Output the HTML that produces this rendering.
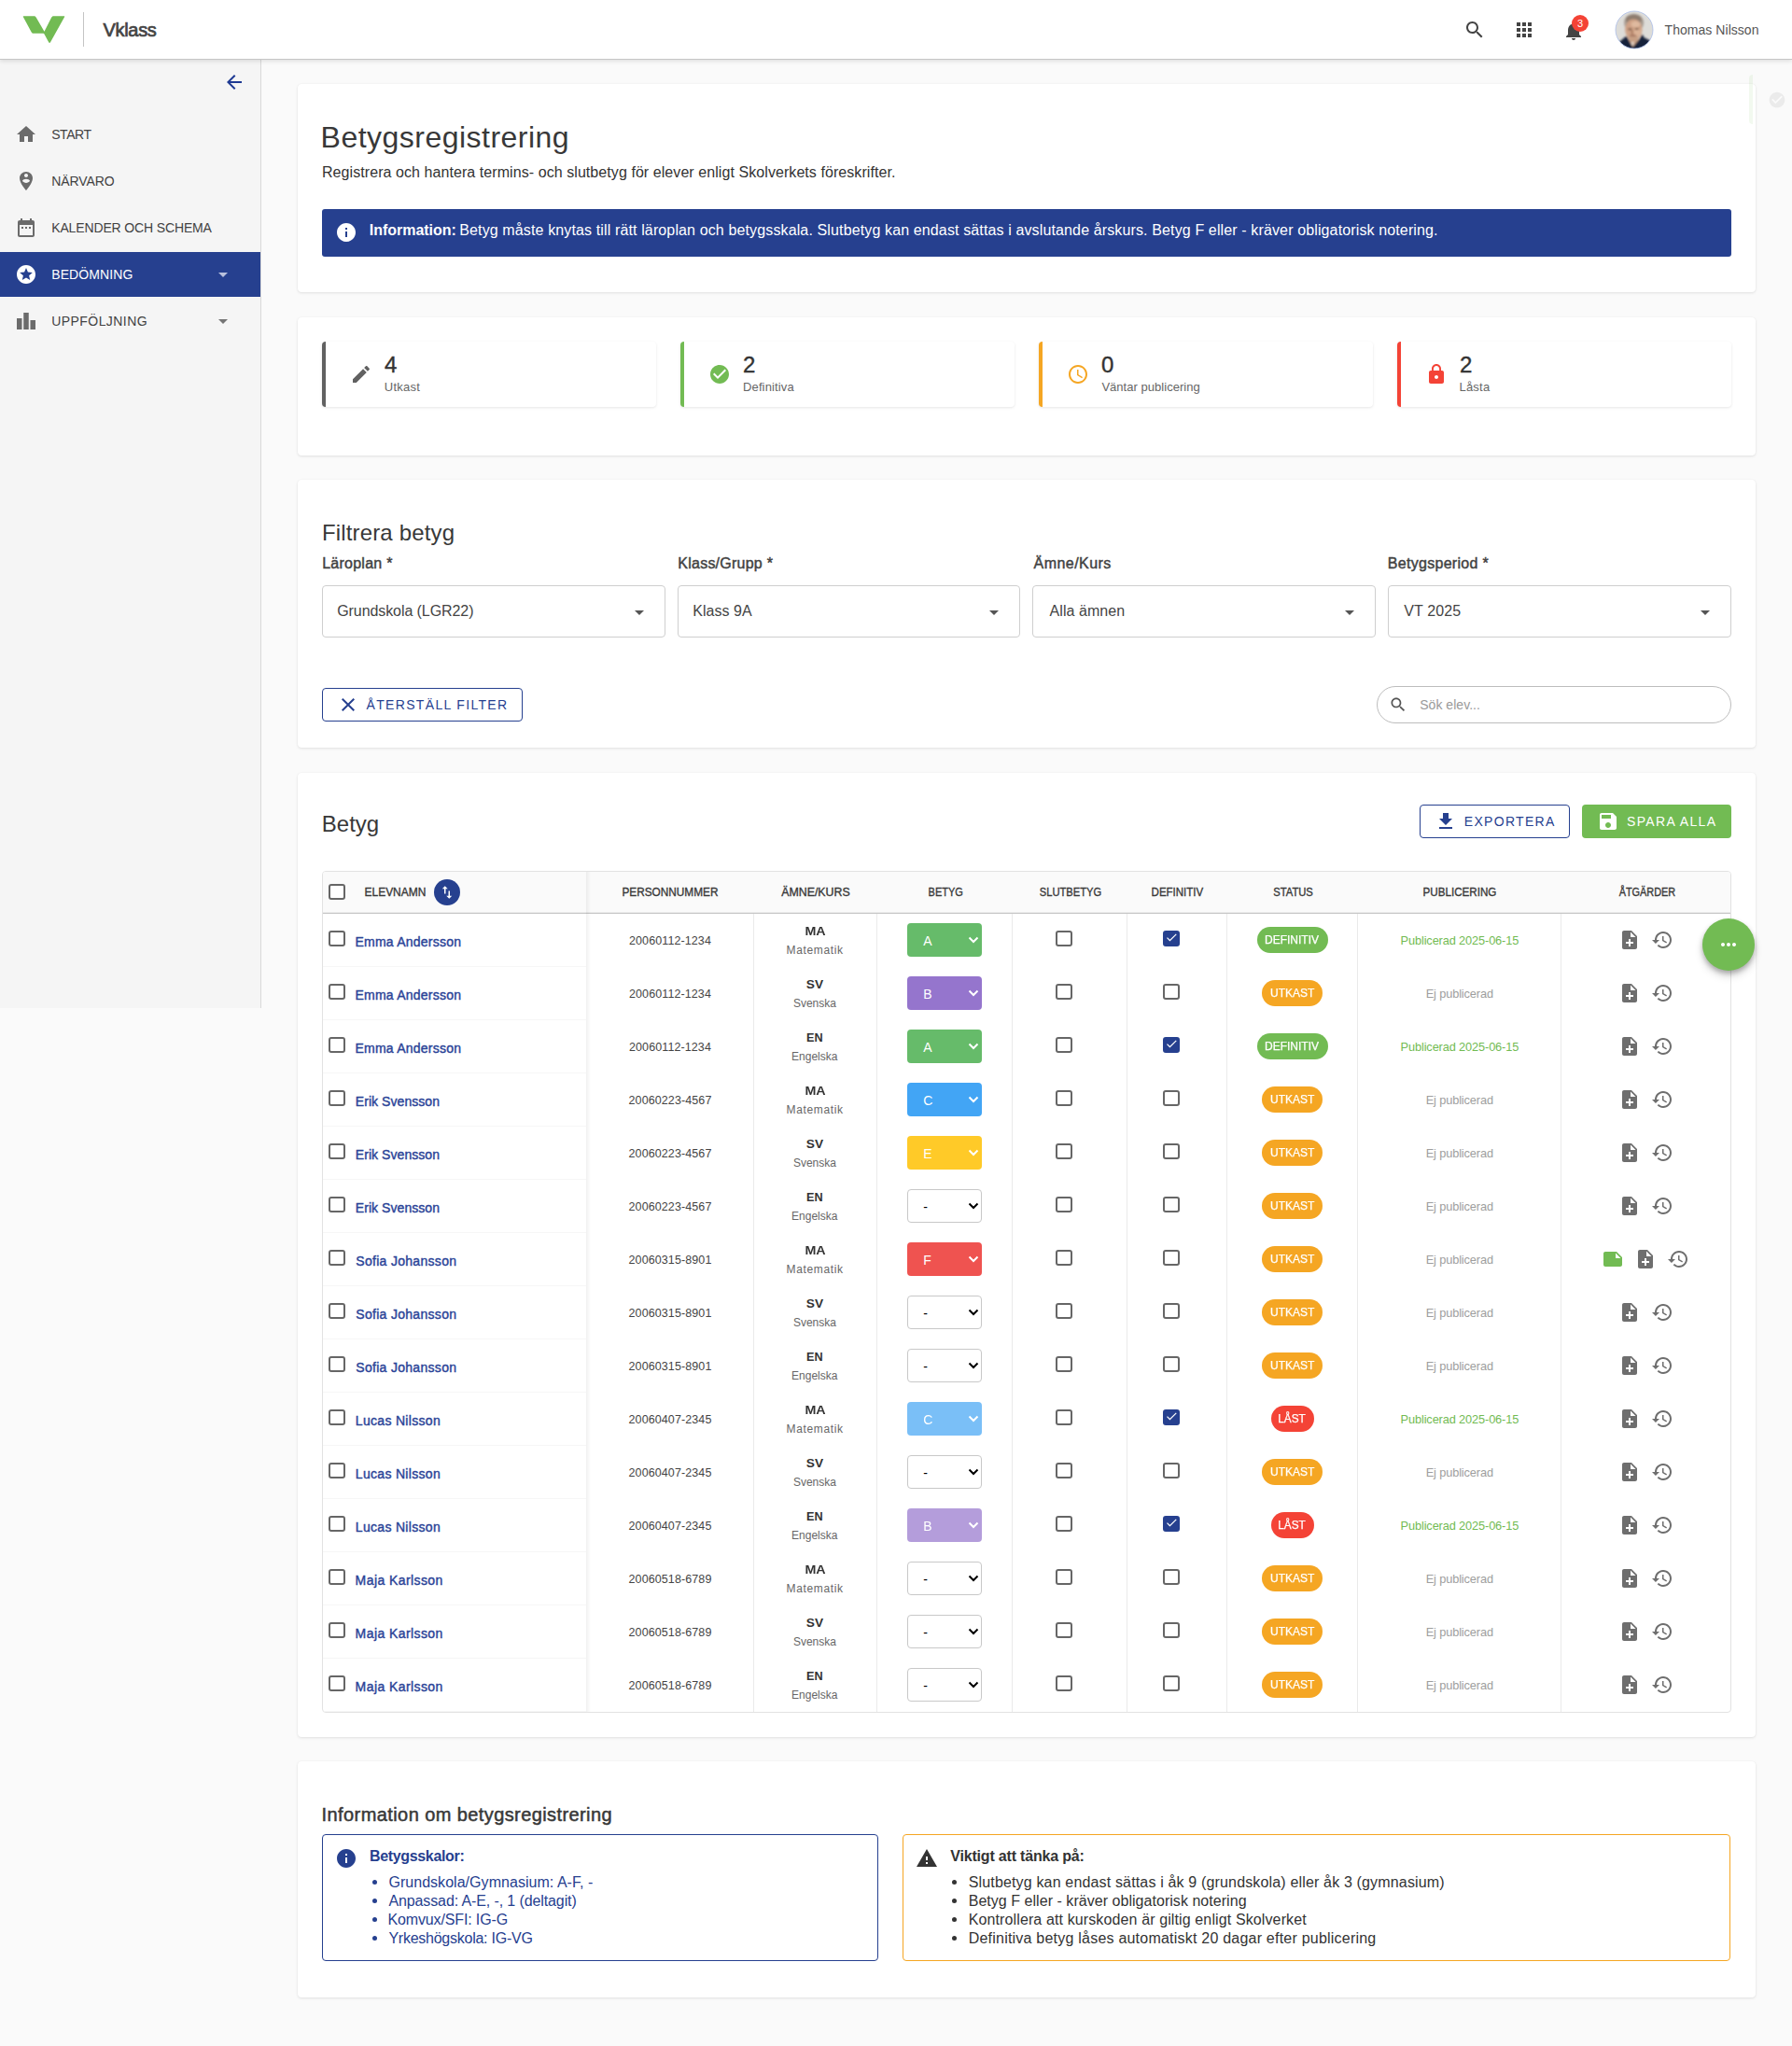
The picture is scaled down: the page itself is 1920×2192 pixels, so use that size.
<!DOCTYPE html>
<html lang="sv"><head><meta charset="utf-8"><title>Betygsregistrering - Vklass</title>
<style>
*{box-sizing:border-box}
html,body{margin:0;padding:0}
body{position:relative;width:1920px;height:2192px;overflow:hidden;background:#fafafa;color:#333;
 font-family:"Liberation Sans",sans-serif;font-size:16px;-webkit-font-smoothing:antialiased}
.ic{display:block;flex:none}
b{font-weight:700}
/* header */
.top{position:absolute;left:0;top:0;width:1920px;height:64px;background:#fff;border-bottom:1px solid #c6c6c6;
 box-shadow:0 2px 4px rgba(0,0,0,.10);z-index:20}
.logo{position:absolute;left:24px;top:17px}
.vsep{position:absolute;left:89px;top:13px;width:1px;height:37px;background:#c4c4c4}
.brand{position:absolute;left:109px;top:16px;font-size:20px;line-height:32px;font-weight:400;color:#444;-webkit-text-stroke:.7px #444}
.hi{position:absolute;top:20px;color:#444}
.badge{position:absolute;left:1684px;top:16px;width:18px;height:18px;border-radius:9px;background:#f44336;color:#fff;
 font-size:11px;line-height:18px;text-align:center}
.avatar{position:absolute;left:1730px;top:11px}
.uname{position:absolute;left:1783px;top:20px;font-size:14px;line-height:24px;color:#555;white-space:nowrap}
/* sidebar */
.side{position:absolute;left:0;top:64px;width:280px;height:1016px;background:#f5f5f5;border-right:1px solid #d9d9d9;z-index:5}
.bk{position:absolute;left:239px;top:12px}
.nav{position:absolute;left:0;width:279px;height:48px;color:#424242}
.nav .ic{position:absolute;left:16px;top:12px;color:#6b6b6b}
.nav .nl{position:absolute;left:56px;top:0;font-size:14px;line-height:48px;white-space:nowrap;letter-spacing:.4px}
.nav .dd{position:absolute;left:234px;top:22px;color:#757575}
.nav:nth-of-type(1){top:56px}.nav:nth-of-type(2){top:106px}.nav:nth-of-type(3){top:156px}.nav:nth-of-type(4){top:206px}.nav:nth-of-type(5){top:256px}
.nav.act{background:#26408f;color:#fff}
.nav.act .ic{color:#fff}
.nav.act .dd{color:#b9c1dd}
/* ghost */
.ghost{position:absolute;left:1874px;top:80px;width:4.2px;height:53px;border-radius:4px 0 0 4px;background:rgba(114,187,83,.09);z-index:30}
.ghostc{position:absolute;left:1894px;top:97px;z-index:1}
/* cards */
.card{position:absolute;left:319px;width:1562px;background:#fff;border-radius:4px;box-shadow:0 1px 3px rgba(0,0,0,.10),0 0 1px rgba(0,0,0,.08);z-index:2}
.k1{top:90px;height:223px}
.k2{top:340px;height:148px}
.k3{top:514px;height:286.5px}
.k4{top:827.5px;height:1033.5px}
.k5{top:1887px;height:252.5px}
h1,h2,h3,p{margin:0;font-weight:400;white-space:nowrap}
h1{position:absolute;left:26px;top:37px;font-size:32px;line-height:40px;color:#383838}
.sub{position:absolute;left:26px;top:83px;font-size:16px;line-height:24px;color:#333}
.alert{position:absolute;left:26px;top:133.5px;width:1510px;height:51.5px;background:#26408f;border-radius:3px;color:#fff}
.alert .ic{position:absolute;left:14px;top:13.5px}
.at{position:absolute;left:51px;top:11.5px;font-size:16px;line-height:24px;white-space:nowrap}
.at b,.at span,.ibt b,.ibt li span{display:inline-block}
/* stats */
.stat{position:absolute;top:26px;width:358.4px;height:70px;background:#fff;border-radius:4px;border-left:4px solid #616161;
 box-shadow:0 1px 3px rgba(0,0,0,.10)}
.s1{left:26px}.s2{left:410px;border-color:#72bb53}.s3{left:794px;border-color:#f5a623}.s4{left:1178px;border-color:#f44336}
.stat .ic{position:absolute;left:26px;top:23px}
.sv{position:absolute;left:63px;top:0}
.num{position:absolute;left:0;top:10px;font-size:24px;line-height:30px;color:#333;font-weight:400;-webkit-text-stroke:.4px #333}
.lbl{position:absolute;left:0;top:40px;font-size:13px;line-height:18px;color:#666;white-space:nowrap}
/* filter */
h2{position:absolute;left:26px;font-size:24px;line-height:32px;color:#383838}
.k3 h2{top:40.7px}
.frow{position:absolute;left:26px;top:0}
.fg{position:absolute;top:0;width:367.8px}
.fg:nth-child(1){left:0}.fg:nth-child(2){left:380.6px}.fg:nth-child(3){left:761.2px}.fg:nth-child(4){left:1141.8px}
.fg label{position:absolute;left:0;top:77.8px;font-size:16px;line-height:24px;font-weight:400;color:#424242;white-space:nowrap;-webkit-text-stroke:.45px #424242}
.sel{position:absolute;left:0;top:113px;width:367.8px;height:56px;border:1px solid #cfcfcf;border-radius:4px;background:#fff}
.sel span{position:absolute;left:16px;top:15.2px;font-size:16px;line-height:24px;color:#444;white-space:nowrap}
.sel .ic{position:absolute;right:15px;top:15.5px}
.btn{position:absolute;height:36px;border-radius:4px;font-size:14px;white-space:nowrap}
.btn span{position:absolute;top:0;line-height:34px}
.btn.out{border:1px solid #26408f;color:#26408f;background:#fff}
.btn.grn{background:#72bb53;color:#fff}
.btn.grn span{line-height:36px}
.rst{left:26px;top:223px;width:214.5px}
.rst .ic{position:absolute;left:15px;top:4.7px}
.rst span{left:47.5px}
.srch{position:absolute;left:1156.3px;top:221.3px;width:379.4px;height:39.7px;border:1px solid #bdbdbd;border-radius:20px;background:#fff}
.srch .ic{position:absolute;left:11.5px;top:8.4px}
.ph{position:absolute;left:44.5px;top:7px;font-size:14px;line-height:24px;color:#9a9a9a;white-space:nowrap}
/* table card */
.k4 h2{top:39px}
.exp{left:1202px;top:34.5px;width:161px}
.exp .ic{position:absolute;left:15px;top:5px}
.exp span{left:47px}
.sav{left:1376px;top:34.5px;width:160px}
.sav .ic{position:absolute;left:15.5px;top:6px}
.sav span{left:49px}
.tbl{position:absolute;left:26px;top:105.5px;width:1510px;height:902px;border:1px solid #e2e2e2;border-radius:4px;background:#fff;overflow:hidden}
.tr{display:flex;height:57px;position:relative}
.tr.th{height:44.5px;background:#fafafa;border-bottom:1px solid #c6c6c6;box-shadow:inset 0 -1px 0 #ebebeb}
.td{position:relative;flex:none;height:100%;border-right:1px solid #eaeaea;text-align:center}
.th .td{border-right-color:transparent}
.c1{width:282px;text-align:left;border-right:0;border-bottom:1px solid #f6f6f6}
.th .c1{border-bottom:0}
.c2{width:180px}.c3{width:132px}.c4{width:145px}.c5{width:123px}.c6{width:107px}.c7{width:140px}.c8{width:218px}.c9{width:181px;border-right:0}
.c1sh{position:absolute;left:281.5px;top:0;width:5px;height:100%;background:linear-gradient(90deg,rgba(0,0,0,.06),rgba(0,0,0,0));pointer-events:none}
.hl{display:inline-block;font-size:12.5px;line-height:45px;font-weight:400;color:#383838;white-space:nowrap;-webkit-text-stroke:.35px #383838}
.c1 .hl{position:absolute;left:44.5px;top:0}
.cb{display:inline-block;width:17.3px;height:17.3px;border:2px solid #666;border-radius:3px;background:#fff;vertical-align:top}
.cb.on{background:#26408f;border-color:#26408f}
.cb.on .ic{margin:-2px 0 0 -.6px}
.hcb{position:absolute;left:6.4px;top:13.2px}
.rcb{position:absolute;left:6.4px;top:18px}
.sort{position:absolute;left:119px;top:8px;width:28px;height:28px;border-radius:50%;background:#26408f}
.sort .ic{position:absolute;left:5px;top:5px}
.nm{position:absolute;left:35px;top:20px;font-size:14px;line-height:20px;font-weight:400;color:#2a4397;white-space:nowrap;-webkit-text-stroke:.4px #2a4397}
.pn{display:inline-block;font-size:12.5px;line-height:58px;color:#444;white-space:nowrap}
.sc{display:block;margin-top:10px;font-size:13px;line-height:18px;font-weight:700;color:#333}
.sn{display:block;margin-top:2px;font-size:12px;line-height:18px;color:#666}
.gs{position:absolute;left:32.2px;top:10.5px;width:79.7px;height:36px;border-radius:4px;color:#fff;font-size:14px;text-align:left}
.gs .gl{position:absolute;left:17px;top:.5px;line-height:36px}
.gs .chev{position:absolute;left:64.5px;top:14px}
.gA{background:#66bb6a}.gB{background:#9575cd}.gC{background:#42a5f5}.gE{background:#ffca28}.gF{background:#ef5350}
.gN{background:#fff;border:1px solid #c8c8c8;color:#000}
.gN .gl{left:16px;top:0}.gN .chev{left:63.5px;top:13px}
.gs.lk{opacity:.7}
.c5 .cb{position:absolute;left:46.3px;top:18px}
.c6 .cb{position:absolute;left:38.3px;top:18px}
.chip{display:inline-block;margin-top:14px;height:28.4px;line-height:28.6px;padding:0;text-align:center;border-radius:14px;color:#fff;font-size:12px;font-weight:400;white-space:nowrap;-webkit-text-stroke:.25px #fff}
.chip span{display:inline-block}
.cdef{background:#72bb53;width:76px}.cutk{background:#f5a623;width:65px}.clast{background:#f44336;width:46px}
.pub{display:inline-block;font-size:12.8px;line-height:57px;color:#9e9e9e;white-space:nowrap}
.pub.ok{color:#72bb53}
.c9{color:#6e6e6e}
.acts{display:flex;justify-content:center;padding-top:16px;margin-right:1px}
.ab{display:block;width:35px;height:24px}
.ab .ic{margin:0 auto}
.fab{position:absolute;left:1505px;top:156px;width:56px;height:56px;border-radius:50%;background:#72bb53;z-index:6;
 box-shadow:0 3px 5px rgba(0,0,0,.25),0 6px 10px rgba(0,0,0,.14)}
.fab .ic{margin:16px}
/* info card */
h3{position:absolute;left:26px;top:41.6px;font-size:20px;line-height:30px;font-weight:400;color:#383838;-webkit-text-stroke:.5px #383838}
.ibox{position:absolute;top:78.3px;height:136px;border-radius:4px;background:#fff}
.ib1{left:26px;width:595.8px;border:1px solid #26408f;color:#26408f}
.ib2{left:647.9px;width:887.6px;border:1px solid #f5a623;color:#333}
.ibox .ic{position:absolute;left:13px;top:13px}
.ibt{position:absolute;left:50px;top:11px;font-size:16px;line-height:24px;white-space:nowrap}
.ibt ul{list-style:none;margin:5.6px 0 0 0;padding:0}
.ibt li{position:relative;padding-left:20px;line-height:19.9px}
.ibt li::before{content:"";position:absolute;left:2.5px;top:7.6px;width:5px;height:5px;border-radius:50%;background:currentColor}

</style></head><body>
<header class="top">
<svg class="logo" width="46" height="30" viewBox="0 0 46 30"><path fill="#72bb53" d="M1.2 0.3h11.2c1 0 1.7.4 2.2 1.3l8.9 15.2L31 2c.6-1.2 1.3-1.7 2.4-1.7h11.4c.5 0 .6.3.4.7L30 28.3c-.5.9-1.3.9-1.8 0l-4.6-8.6c-.4-.7-.8-.9-1.6-.9H11.8c-1 0-1.6-.4-2.1-1.300L.8 1C.6.6.7.3 1.200.3z"/></svg>
<span class="vsep"></span>
<span class="brand" style="letter-spacing:-0.32px;transform:translateX(1.5px);">Vklass</span>
<span class="hi" style="left:1567.600px"><svg class="ic" width="24" height="24" viewBox="0 0 24 24" style=""><path fill="currentColor" d="M15.5 14h-.79l-.28-.27C15.41 12.59 16 11.11 16 9.5 16 5.91 13.09 3 9.5 3S3 5.91 3 9.5 5.91 16 9.5 16c1.61 0 3.09-.59 4.23-1.57l.27.28v.79l5 4.99L20.49 19l-4.99-5zm-6 0C7.01 14 5 11.99 5 9.5S7.01 5 9.5 5 14 7.01 14 9.5 11.99 14 9.5 14z"/></svg></span>
<span class="hi" style="left:1621px"><svg class="ic" width="24" height="24" viewBox="0 0 24 24" style=""><path fill="currentColor" d="M4 8h4V4H4v4zm6 12h4v-4h-4v4zm-6 0h4v-4H4v4zm0-6h4v-4H4v4zm6 0h4v-4h-4v4zm6-10v4h4V4h-4zm-6 4h4V4h-4v4zm6 6h4v-4h-4v4zm0 6h4v-4h-4v4z"/></svg></span>
<span class="hi" style="left:1674px;top:21px"><svg class="ic" width="24" height="24" viewBox="0 0 24 24" style=""><path fill="currentColor" d="M12 22c1.1 0 2-.9 2-2h-4c0 1.1.89 2 2 2zm6-6v-5c0-3.07-1.64-5.64-4.5-6.32V4c0-.83-.67-1.5-1.5-1.5s-1.5.67-1.5 1.5v.68C7.63 5.36 6 7.92 6 11v5l-2 2v1h16v-1l-2-2z"/></svg></span>
<span class="badge">3</span>
<svg class="avatar" width="42" height="42" viewBox="-1 -1 42 42"><defs><clipPath id="avc"><circle cx="20" cy="20" r="20"/></clipPath><filter id="avb" x="-10%" y="-10%" width="120%" height="120%"><feGaussianBlur stdDeviation="1.1"/></filter></defs>
<g clip-path="url(#avc)"><rect x="-2" y="-2" width="44" height="44" fill="#dddcd8"/><g filter="url(#avb)">
<ellipse cx="19.6" cy="12.5" rx="10.6" ry="9.8" fill="#a89d93"/><ellipse cx="19.3" cy="9" rx="8.6" ry="5.6" fill="#8e7d70"/>
<ellipse cx="19.3" cy="19.6" rx="9.2" ry="11.2" fill="#cfa286"/><ellipse cx="21.5" cy="14" rx="5" ry="3.2" fill="#dfb99f"/><ellipse cx="23.5" cy="22.5" rx="3.6" ry="4.2" fill="#dbb296"/>
<ellipse cx="15.4" cy="19.3" rx="2.4" ry="1.1" fill="#7b5b49"/><ellipse cx="22.8" cy="18.9" rx="2.2" ry="1" fill="#7b5b49"/><ellipse cx="17.6" cy="22.5" rx="1.1" ry="2.6" fill="#a97a61"/>
<ellipse cx="18.6" cy="26.2" rx="3.6" ry=".9" fill="#9c6a55"/>
<path d="M13.5 27 24.5 27 24.5 33 18.500 38.500 15 33z" fill="#c79f83"/>
<path d="M-2 42V37L5 32 11.700 26.400 17.200 36.600 18.600 38.200 25.600 29.800 28.400 24.400 30.600 28.200 36.500 31.200 42 35V42z" fill="#16243b"/>
<path d="M16.800 33.500 19.600 32.600 18.400 37.600z" fill="#e9e2da"/></g></g>
<circle cx="20" cy="20" r="20" fill="none" stroke="#a9bce9" stroke-width=".8"/></svg>
<span class="uname" style="letter-spacing:0.04px;transform:translateX(0.6px);">Thomas Nilsson</span>
</header>
<nav class="side"><span class="bk"><svg class="ic" width="24" height="24" viewBox="0 0 24 24" style=""><path fill="#1f3a93" d="M20 11H7.83l5.59-5.59L12 4l-8 8 8 8 1.41-1.41L7.83 13H20v-2z"/></svg></span>
<div class="nav"><svg class="ic" width="24" height="24" viewBox="0 0 24 24" style=""><path fill="currentColor" d="M10 20v-6h4v6h5v-8h3L12 3 2 12h3v8z"/></svg><span class="nl" style="letter-spacing:-0.45px;transform:translateX(-0.8px);">START</span></div>
<div class="nav"><svg class="ic" width="24" height="24" viewBox="0 0 24 24" style=""><path fill="currentColor" d="M12 2C8.14 2 5 5.14 5 9c0 5.25 7 13 7 13s7-7.75 7-13c0-3.86-3.14-7-7-7zm0 2c1.1 0 2 .9 2 2 0 1.11-.9 2-2 2s-2-.89-2-2c0-1.1.9-2 2-2zm0 10c-1.67 0-3.14-.85-4-2.15.02-1.32 2.67-2.05 4-2.05s3.98.73 4 2.05c-.86 1.3-2.33 2.15-4 2.15z"/></svg><span class="nl" style="letter-spacing:-0.07px;transform:translateX(-0.8px);">NÄRVARO</span></div>
<div class="nav"><svg class="ic" width="24" height="24" viewBox="0 0 24 24" style=""><path fill="currentColor" d="M9 11H7v2h2v-2zm4 0h-2v2h2v-2zm4 0h-2v2h2v-2zm2-7h-1V2h-2v2H8V2H6v2H5c-1.11 0-1.99.9-1.99 2L3 20c0 1.1.89 2 2 2h14c1.1 0 2-.9 2-2V6c0-1.1-.9-2-2-2zm0 16H5V9h14v11z"/></svg><span class="nl" style="letter-spacing:-0.14px;transform:translateX(-0.8px);">KALENDER OCH SCHEMA</span></div>
<div class="nav act"><svg class="ic" width="24" height="24" viewBox="0 0 24 24" style=""><path fill="currentColor" d="M11.99 2C6.47 2 2 6.48 2 12s4.47 10 9.99 10C17.52 22 22 17.52 22 12S17.52 2 11.99 2zm4.24 16L12 15.45 7.77 18l1.12-4.81-3.73-3.23 4.92-.42L12 5l1.92 4.53 4.92.42-3.73 3.23L16.23 18z"/></svg><span class="nl" style="letter-spacing:0.10px;transform:translateX(-0.8px);">BEDÖMNING</span><svg class="dd" width="10" height="5" viewBox="0 0 10 5"><path d="M0 0h10L5 5z" fill="currentColor"/></svg></div>
<div class="nav"><svg class="ic" width="24" height="24" viewBox="0 0 24 24" style=""><path fill="currentColor" d="M7.5 21H2V9h5.5v12zm7.25-18h-5.5v18h5.5V3zM22 11h-5.5v10H22V11z"/></svg><span class="nl" style="letter-spacing:0.44px;transform:translateX(-0.8px);">UPPFÖLJNING</span><svg class="dd" width="10" height="5" viewBox="0 0 10 5"><path d="M0 0h10L5 5z" fill="currentColor"/></svg></div>
</nav>
<div class="ghost"></div><span class="ghostc"><svg class="ic" width="20" height="20" viewBox="0 0 24 24" style=""><path fill="#ebebeb" d="M12 2C6.48 2 2 6.48 2 12s4.48 10 10 10 10-4.48 10-10S17.52 2 12 2zm-2 15l-5-5 1.41-1.41L10 14.17l7.59-7.59L19 8l-9 9z"/></svg></span>
<main>
<section class="card k1">
<h1 style="letter-spacing:0.48px;transform:translateX(-1.4px);">Betygsregistrering</h1>
<p class="sub" style="letter-spacing:0.07px;">Registrera och hantera termins- och slutbetyg för elever enligt Skolverkets föreskrifter.</p>
<div class="alert"><svg class="ic" width="24" height="24" viewBox="0 0 24 24" style=""><path fill="#fff" d="M12 2C6.48 2 2 6.48 2 12s4.48 10 10 10 10-4.48 10-10S17.52 2 12 2zm1 15h-2v-6h2v6zm0-8h-2V7h2v2z"/></svg><span class="at"><b style="letter-spacing:-0.03px;transform:translateX(-0.2px);">Information:</b> <span style="letter-spacing:0.13px;transform:translateX(-1.2px);">Betyg måste knytas till rätt läroplan och betygsskala. Slutbetyg kan endast sättas i avslutande årskurs. Betyg F eller - kräver obligatorisk notering.</span></span></div>
</section>
<section class="card k2">
<div class="stat s1"><svg class="ic" width="24" height="24" viewBox="0 0 24 24" style=""><path fill="#616161" d="M3 17.25V21h3.75L17.81 9.94l-3.75-3.75L3 17.25zM20.71 7.04c.39-.39.39-1.02 0-1.41l-2.34-2.34c-.39-.39-1.02-.39-1.41 0l-1.83 1.83 3.75 3.75 1.83-1.83z"/></svg><div class="sv"><div class="num">4</div><div class="lbl" style="letter-spacing:0.24px;transform:translateX(-0.2px);">Utkast</div></div></div>
<div class="stat s2"><svg class="ic" width="24" height="24" viewBox="0 0 24 24" style=""><path fill="#72bb53" d="M12 2C6.48 2 2 6.48 2 12s4.48 10 10 10 10-4.48 10-10S17.52 2 12 2zm-2 15l-5-5 1.41-1.41L10 14.17l7.59-7.59L19 8l-9 9z"/></svg><div class="sv"><div class="num">2</div><div class="lbl" style="letter-spacing:0.13px;">Definitiva</div></div></div>
<div class="stat s3"><svg class="ic" width="24" height="24" viewBox="0 0 24 24" style=""><path fill="#f5a623" d="M11.99 2C6.47 2 2 6.48 2 12s4.47 10 9.99 10C17.52 22 22 17.52 22 12S17.52 2 11.99 2zM12 20c-4.42 0-8-3.58-8-8s3.58-8 8-8 8 3.58 8 8-3.58 8-8 8zm.5-13H11v6l5.25 3.15.75-1.23-4.5-2.67z"/></svg><div class="sv"><div class="num">0</div><div class="lbl" style="letter-spacing:0.03px;transform:translateX(0.4px);">Väntar publicering</div></div></div>
<div class="stat s4"><svg class="ic" width="24" height="24" viewBox="0 0 24 24" style=""><path fill="#f44336" d="M18 8h-1V6c0-2.76-2.24-5-5-5S7 3.24 7 6v2H6c-1.1 0-2 .9-2 2v10c0 1.1.9 2 2 2h12c1.1 0 2-.9 2-2V10c0-1.1-.9-2-2-2zm-6 9c-1.1 0-2-.9-2-2s.9-2 2-2 2 .9 2 2-.9 2-2 2zm3.1-9H8.9V6c0-1.71 1.39-3.1 3.1-3.1 1.71 0 3.1 1.39 3.1 3.1v2z"/></svg><div class="sv"><div class="num">2</div><div class="lbl" style="letter-spacing:0.25px;transform:translateX(-0.6px);">Låsta</div></div></div>
</section>
<section class="card k3"><h2 style="letter-spacing:0.15px;">Filtrera betyg</h2><div class="frow">
<div class="fg"><label style="letter-spacing:0.25px;transform:translateX(0.2px);">Läroplan *</label><div class="sel"><span style="letter-spacing:-0.08px;transform:translateX(-0.8px);">Grundskola (LGR22)</span><svg class="ic" width="24" height="24" viewBox="0 0 24 24" style=""><path fill="#555" d="M7 10l5 5 5-5z"/></svg></div></div>
<div class="fg"><label style="letter-spacing:0.24px;transform:translateX(0.7px);">Klass/Grupp *</label><div class="sel"><span style="letter-spacing:0.06px;transform:translateX(-0.4px);">Klass 9A</span><svg class="ic" width="24" height="24" viewBox="0 0 24 24" style=""><path fill="#555" d="M7 10l5 5 5-5z"/></svg></div></div>
<div class="fg"><label style="letter-spacing:0.45px;transform:translateX(1.4px);">Ämne/Kurs</label><div class="sel"><span style="letter-spacing:0.06px;transform:translateX(1.4px);">Alla ämnen</span><svg class="ic" width="24" height="24" viewBox="0 0 24 24" style=""><path fill="#555" d="M7 10l5 5 5-5z"/></svg></div></div>
<div class="fg"><label style="letter-spacing:0.29px;">Betygsperiod *</label><div class="sel"><span style="letter-spacing:0.13px;transform:translateX(0.4px);">VT 2025</span><svg class="ic" width="24" height="24" viewBox="0 0 24 24" style=""><path fill="#555" d="M7 10l5 5 5-5z"/></svg></div></div>
</div><div class="frow2"><span class="btn out rst"><svg class="ic" width="24" height="24" viewBox="0 0 24 24" style=""><path fill="currentColor" d="M19 6.41L17.59 5 12 10.59 6.41 5 5 6.41 10.59 12 5 17.59 6.41 19 12 13.41 17.59 19 19 17.59 13.41 12z"/></svg><span style="letter-spacing:1.33px;transform:translateX(-1.0px);">ÅTERSTÄLL FILTER</span></span><span class="srch"><svg class="ic" width="20" height="20" viewBox="0 0 24 24" style=""><path fill="#555" d="M15.5 14h-.79l-.28-.27C15.41 12.59 16 11.11 16 9.5 16 5.91 13.09 3 9.5 3S3 5.91 3 9.5 5.91 16 9.5 16c1.61 0 3.09-.59 4.23-1.57l.27.28v.79l5 4.99L20.49 19l-4.99-5zm-6 0C7.01 14 5 11.99 5 9.5S7.01 5 9.5 5 14 7.01 14 9.5 11.99 14 9.5 14z"/></svg><span class="ph" style="letter-spacing:0.04px;transform:translateX(0.4px);">Sök elev...</span></span></div></section>
<section class="card k4"><h2 style="letter-spacing:0.00px;transform:translateX(-0.2px);">Betyg</h2>
<span class="btn out exp"><svg class="ic" width="24" height="24" viewBox="0 0 24 24" style=""><path fill="currentColor" d="M19 9h-4V3H9v6H5l7 7 7-7zM5 18v2h14v-2H5z"/></svg><span style="letter-spacing:1.30px;transform:translateX(-0.2px);">EXPORTERA</span></span>
<span class="btn grn sav"><svg class="ic" width="24" height="24" viewBox="0 0 24 24" style=""><path fill="#fff" d="M17 3H5c-1.11 0-2 .9-2 2v14c0 1.1.89 2 2 2h14c1.1 0 2-.9 2-2V7l-4-4zm-5 16c-1.66 0-3-1.34-3-3s1.34-3 3-3 3 1.34 3 3-1.34 3-3 3zm3-10H5V5h10v4z"/></svg><span style="letter-spacing:1.33px;transform:translateX(-1.0px);">SPARA ALLA</span></span>
<div class="tbl"><div class="tr th">
<div class="td c1"><span class="cb hcb"></span><span class="hl" style="transform:translateX(-0.5px) scaleX(0.958);transform-origin:0 50%;">ELEVNAMN</span><span class="sort"><svg class="ic" width="18" height="18" viewBox="0 0 24 24" style=""><path fill="#fff" d="M16 17.01V10h-2v7.01h-3L15 21l4-3.99h-3zM9 3L5 6.99h3V14h2V6.99h3L9 3z"/></svg></span></div>
<div class="td c2"><span class="hl" style="transform:translateX(0.4px) scaleX(0.945);transform-origin:50% 50%;">PERSONNUMMER</span></div>
<div class="td c3"><span class="hl" style="transform:translateX(0.8px) scaleX(0.990);transform-origin:50% 50%;">ÄMNE/KURS</span></div>
<div class="td c4"><span class="hl" style="transform:translateX(1.0px) scaleX(0.880);transform-origin:50% 50%;">BETYG</span></div>
<div class="td c5"><span class="hl" style="transform:translateX(0.8px) scaleX(0.893);transform-origin:50% 50%;">SLUTBETYG</span></div>
<div class="td c6"><span class="hl" style="transform:translateX(0.2px) scaleX(0.921);transform-origin:50% 50%;">DEFINITIV</span></div>
<div class="td c7"><span class="hl" style="transform:translateX(0.8px) scaleX(0.898);transform-origin:50% 50%;">STATUS</span></div>
<div class="td c8"><span class="hl" style="transform:translateX(0.6px) scaleX(0.931);transform-origin:50% 50%;">PUBLICERING</span></div>
<div class="td c9"><span class="hl" style="transform:translateX(1.2px) scaleX(0.870);transform-origin:50% 50%;">ÅTGÄRDER</span></div>
</div>
<div class="tr"><div class="td c1"><span class="cb rcb"></span><span class="nm" style="letter-spacing:0.24px;transform:translateX(-0.6px);">Emma Andersson</span></div><div class="td c2"><span class="pn" style="letter-spacing:0.10px;transform:translateX(0.5px);">20060112-1234</span></div><div class="td c3"><span class="sc" style="transform:scaleX(1.100);transform-origin:50% 50%;">MA</span><span class="sn" style="letter-spacing:0.65px;transform:translateX(-0.4px);">Matematik</span></div><div class="td c4"><span class="gs gA"><span class="gl">A</span><svg class="chev" width="12" height="8" viewBox="0 0 12 8"><path d="M1.5 1.5 6 6l4.5-4.5" fill="none" stroke="currentColor" stroke-width="2"/></svg></span></div><div class="td c5"><span class="cb "></span></div><div class="td c6"><span class="cb on "><svg class="ic" width="14.5" height="14.5" viewBox="0 0 24 24" style=""><path fill="#fff" d="M9 16.17L4.83 12l-1.41 1.41L9 19 21 7l-1.41-1.41z"/></svg></span></div><div class="td c7"><span class="chip cdef"><span style="transform:scaleX(1.001);transform-origin:50% 50%;">DEFINITIV</span></span></div><div class="td c8"><span class="pub ok" style="letter-spacing:-0.14px;transform:translateX(0.4px);">Publicerad 2025-06-15</span></div><div class="td c9"><div class="acts"><span class="ab"><svg class="ic" width="24" height="24" viewBox="0 0 24 24" style=""><path fill="currentColor" d="M14 2H6c-1.1 0-1.99.9-1.99 2L4 20c0 1.1.89 2 1.99 2H18c1.1 0 2-.9 2-2V8l-6-6zm2 14h-3v3h-2v-3H8v-2h3v-3h2v3h3v2zm-3-7V3.5L18.5 9H13z"/></svg></span><span class="ab"><svg class="ic" width="24" height="24" viewBox="0 0 24 24" style=""><path fill="currentColor" d="M13 3c-4.97 0-9 4.03-9 9H1l3.89 3.89.07.14L9 12H6c0-3.87 3.13-7 7-7s7 3.13 7 7-3.13 7-7 7c-1.93 0-3.68-.79-4.94-2.06l-1.42 1.42C8.27 19.99 10.51 21 13 21c4.97 0 9-4.03 9-9s-4.03-9-9-9zm-1 5v5l4.28 2.54.72-1.21-3.5-2.08V8H12z"/></svg></span></div></div></div>
<div class="tr"><div class="td c1"><span class="cb rcb"></span><span class="nm" style="letter-spacing:0.24px;transform:translateX(-0.6px);">Emma Andersson</span></div><div class="td c2"><span class="pn" style="letter-spacing:0.10px;transform:translateX(0.5px);">20060112-1234</span></div><div class="td c3"><span class="sc" style="transform:translateX(-0.6px) scaleX(1.054);transform-origin:50% 50%;">SV</span><span class="sn" style="letter-spacing:-0.04px;transform:translateX(-0.6px);">Svenska</span></div><div class="td c4"><span class="gs gB"><span class="gl">B</span><svg class="chev" width="12" height="8" viewBox="0 0 12 8"><path d="M1.5 1.5 6 6l4.5-4.5" fill="none" stroke="currentColor" stroke-width="2"/></svg></span></div><div class="td c5"><span class="cb "></span></div><div class="td c6"><span class="cb "></span></div><div class="td c7"><span class="chip cutk"><span style="transform:scaleX(1.001);transform-origin:50% 50%;">UTKAST</span></span></div><div class="td c8"><span class="pub" style="letter-spacing:-0.14px;transform:translateX(0.3px);">Ej publicerad</span></div><div class="td c9"><div class="acts"><span class="ab"><svg class="ic" width="24" height="24" viewBox="0 0 24 24" style=""><path fill="currentColor" d="M14 2H6c-1.1 0-1.99.9-1.99 2L4 20c0 1.1.89 2 1.99 2H18c1.1 0 2-.9 2-2V8l-6-6zm2 14h-3v3h-2v-3H8v-2h3v-3h2v3h3v2zm-3-7V3.5L18.5 9H13z"/></svg></span><span class="ab"><svg class="ic" width="24" height="24" viewBox="0 0 24 24" style=""><path fill="currentColor" d="M13 3c-4.97 0-9 4.03-9 9H1l3.89 3.89.07.14L9 12H6c0-3.87 3.13-7 7-7s7 3.13 7 7-3.13 7-7 7c-1.93 0-3.68-.79-4.94-2.06l-1.42 1.42C8.27 19.99 10.51 21 13 21c4.97 0 9-4.03 9-9s-4.03-9-9-9zm-1 5v5l4.28 2.54.72-1.21-3.5-2.08V8H12z"/></svg></span></div></div></div>
<div class="tr"><div class="td c1"><span class="cb rcb"></span><span class="nm" style="letter-spacing:0.24px;transform:translateX(-0.6px);">Emma Andersson</span></div><div class="td c2"><span class="pn" style="letter-spacing:0.10px;transform:translateX(0.5px);">20060112-1234</span></div><div class="td c3"><span class="sc" style="transform:translateX(-0.6px) scaleX(0.975);transform-origin:50% 50%;">EN</span><span class="sn" style="letter-spacing:-0.02px;transform:translateX(-0.8px);">Engelska</span></div><div class="td c4"><span class="gs gA"><span class="gl">A</span><svg class="chev" width="12" height="8" viewBox="0 0 12 8"><path d="M1.5 1.5 6 6l4.5-4.5" fill="none" stroke="currentColor" stroke-width="2"/></svg></span></div><div class="td c5"><span class="cb "></span></div><div class="td c6"><span class="cb on "><svg class="ic" width="14.5" height="14.5" viewBox="0 0 24 24" style=""><path fill="#fff" d="M9 16.17L4.83 12l-1.41 1.41L9 19 21 7l-1.41-1.41z"/></svg></span></div><div class="td c7"><span class="chip cdef"><span style="transform:scaleX(1.001);transform-origin:50% 50%;">DEFINITIV</span></span></div><div class="td c8"><span class="pub ok" style="letter-spacing:-0.14px;transform:translateX(0.4px);">Publicerad 2025-06-15</span></div><div class="td c9"><div class="acts"><span class="ab"><svg class="ic" width="24" height="24" viewBox="0 0 24 24" style=""><path fill="currentColor" d="M14 2H6c-1.1 0-1.99.9-1.99 2L4 20c0 1.1.89 2 1.99 2H18c1.1 0 2-.9 2-2V8l-6-6zm2 14h-3v3h-2v-3H8v-2h3v-3h2v3h3v2zm-3-7V3.5L18.5 9H13z"/></svg></span><span class="ab"><svg class="ic" width="24" height="24" viewBox="0 0 24 24" style=""><path fill="currentColor" d="M13 3c-4.97 0-9 4.03-9 9H1l3.89 3.89.07.14L9 12H6c0-3.87 3.13-7 7-7s7 3.13 7 7-3.13 7-7 7c-1.93 0-3.68-.79-4.94-2.06l-1.42 1.42C8.27 19.99 10.51 21 13 21c4.97 0 9-4.03 9-9s-4.03-9-9-9zm-1 5v5l4.28 2.54.72-1.21-3.5-2.08V8H12z"/></svg></span></div></div></div>
<div class="tr"><div class="td c1"><span class="cb rcb"></span><span class="nm" style="letter-spacing:0.06px;transform:translateX(-0.2px);">Erik Svensson</span></div><div class="td c2"><span class="pn" style="letter-spacing:0.10px;transform:translateX(0.5px);">20060223-4567</span></div><div class="td c3"><span class="sc" style="transform:scaleX(1.100);transform-origin:50% 50%;">MA</span><span class="sn" style="letter-spacing:0.65px;transform:translateX(-0.4px);">Matematik</span></div><div class="td c4"><span class="gs gC"><span class="gl">C</span><svg class="chev" width="12" height="8" viewBox="0 0 12 8"><path d="M1.5 1.5 6 6l4.5-4.5" fill="none" stroke="currentColor" stroke-width="2"/></svg></span></div><div class="td c5"><span class="cb "></span></div><div class="td c6"><span class="cb "></span></div><div class="td c7"><span class="chip cutk"><span style="transform:scaleX(1.001);transform-origin:50% 50%;">UTKAST</span></span></div><div class="td c8"><span class="pub" style="letter-spacing:-0.14px;transform:translateX(0.3px);">Ej publicerad</span></div><div class="td c9"><div class="acts"><span class="ab"><svg class="ic" width="24" height="24" viewBox="0 0 24 24" style=""><path fill="currentColor" d="M14 2H6c-1.1 0-1.99.9-1.99 2L4 20c0 1.1.89 2 1.99 2H18c1.1 0 2-.9 2-2V8l-6-6zm2 14h-3v3h-2v-3H8v-2h3v-3h2v3h3v2zm-3-7V3.5L18.5 9H13z"/></svg></span><span class="ab"><svg class="ic" width="24" height="24" viewBox="0 0 24 24" style=""><path fill="currentColor" d="M13 3c-4.97 0-9 4.03-9 9H1l3.89 3.89.07.14L9 12H6c0-3.87 3.13-7 7-7s7 3.13 7 7-3.13 7-7 7c-1.93 0-3.68-.79-4.94-2.06l-1.42 1.42C8.27 19.99 10.51 21 13 21c4.97 0 9-4.03 9-9s-4.03-9-9-9zm-1 5v5l4.28 2.54.72-1.21-3.5-2.08V8H12z"/></svg></span></div></div></div>
<div class="tr"><div class="td c1"><span class="cb rcb"></span><span class="nm" style="letter-spacing:0.06px;transform:translateX(-0.2px);">Erik Svensson</span></div><div class="td c2"><span class="pn" style="letter-spacing:0.10px;transform:translateX(0.5px);">20060223-4567</span></div><div class="td c3"><span class="sc" style="transform:translateX(-0.6px) scaleX(1.054);transform-origin:50% 50%;">SV</span><span class="sn" style="letter-spacing:-0.04px;transform:translateX(-0.6px);">Svenska</span></div><div class="td c4"><span class="gs gE"><span class="gl">E</span><svg class="chev" width="12" height="8" viewBox="0 0 12 8"><path d="M1.5 1.5 6 6l4.5-4.5" fill="none" stroke="currentColor" stroke-width="2"/></svg></span></div><div class="td c5"><span class="cb "></span></div><div class="td c6"><span class="cb "></span></div><div class="td c7"><span class="chip cutk"><span style="transform:scaleX(1.001);transform-origin:50% 50%;">UTKAST</span></span></div><div class="td c8"><span class="pub" style="letter-spacing:-0.14px;transform:translateX(0.3px);">Ej publicerad</span></div><div class="td c9"><div class="acts"><span class="ab"><svg class="ic" width="24" height="24" viewBox="0 0 24 24" style=""><path fill="currentColor" d="M14 2H6c-1.1 0-1.99.9-1.99 2L4 20c0 1.1.89 2 1.99 2H18c1.1 0 2-.9 2-2V8l-6-6zm2 14h-3v3h-2v-3H8v-2h3v-3h2v3h3v2zm-3-7V3.5L18.5 9H13z"/></svg></span><span class="ab"><svg class="ic" width="24" height="24" viewBox="0 0 24 24" style=""><path fill="currentColor" d="M13 3c-4.97 0-9 4.03-9 9H1l3.89 3.89.07.14L9 12H6c0-3.87 3.13-7 7-7s7 3.13 7 7-3.13 7-7 7c-1.93 0-3.68-.79-4.94-2.06l-1.42 1.42C8.27 19.99 10.51 21 13 21c4.97 0 9-4.03 9-9s-4.03-9-9-9zm-1 5v5l4.28 2.54.72-1.21-3.5-2.08V8H12z"/></svg></span></div></div></div>
<div class="tr"><div class="td c1"><span class="cb rcb"></span><span class="nm" style="letter-spacing:0.06px;transform:translateX(-0.2px);">Erik Svensson</span></div><div class="td c2"><span class="pn" style="letter-spacing:0.10px;transform:translateX(0.5px);">20060223-4567</span></div><div class="td c3"><span class="sc" style="transform:translateX(-0.6px) scaleX(0.975);transform-origin:50% 50%;">EN</span><span class="sn" style="letter-spacing:-0.02px;transform:translateX(-0.8px);">Engelska</span></div><div class="td c4"><span class="gs gN"><span class="gl">-</span><svg class="chev" width="12" height="8" viewBox="0 0 12 8"><path d="M1.5 1.5 6 6l4.5-4.5" fill="none" stroke="currentColor" stroke-width="2"/></svg></span></div><div class="td c5"><span class="cb "></span></div><div class="td c6"><span class="cb "></span></div><div class="td c7"><span class="chip cutk"><span style="transform:scaleX(1.001);transform-origin:50% 50%;">UTKAST</span></span></div><div class="td c8"><span class="pub" style="letter-spacing:-0.14px;transform:translateX(0.3px);">Ej publicerad</span></div><div class="td c9"><div class="acts"><span class="ab"><svg class="ic" width="24" height="24" viewBox="0 0 24 24" style=""><path fill="currentColor" d="M14 2H6c-1.1 0-1.99.9-1.99 2L4 20c0 1.1.89 2 1.99 2H18c1.1 0 2-.9 2-2V8l-6-6zm2 14h-3v3h-2v-3H8v-2h3v-3h2v3h3v2zm-3-7V3.5L18.5 9H13z"/></svg></span><span class="ab"><svg class="ic" width="24" height="24" viewBox="0 0 24 24" style=""><path fill="currentColor" d="M13 3c-4.97 0-9 4.03-9 9H1l3.89 3.89.07.14L9 12H6c0-3.87 3.13-7 7-7s7 3.13 7 7-3.13 7-7 7c-1.93 0-3.68-.79-4.94-2.06l-1.42 1.42C8.27 19.99 10.51 21 13 21c4.97 0 9-4.03 9-9s-4.03-9-9-9zm-1 5v5l4.28 2.54.72-1.21-3.5-2.08V8H12z"/></svg></span></div></div></div>
<div class="tr"><div class="td c1"><span class="cb rcb"></span><span class="nm" style="letter-spacing:0.30px;transform:translateX(0.3px);">Sofia Johansson</span></div><div class="td c2"><span class="pn" style="letter-spacing:0.10px;transform:translateX(0.5px);">20060315-8901</span></div><div class="td c3"><span class="sc" style="transform:scaleX(1.100);transform-origin:50% 50%;">MA</span><span class="sn" style="letter-spacing:0.65px;transform:translateX(-0.4px);">Matematik</span></div><div class="td c4"><span class="gs gF"><span class="gl">F</span><svg class="chev" width="12" height="8" viewBox="0 0 12 8"><path d="M1.5 1.5 6 6l4.5-4.5" fill="none" stroke="currentColor" stroke-width="2"/></svg></span></div><div class="td c5"><span class="cb "></span></div><div class="td c6"><span class="cb "></span></div><div class="td c7"><span class="chip cutk"><span style="transform:scaleX(1.001);transform-origin:50% 50%;">UTKAST</span></span></div><div class="td c8"><span class="pub" style="letter-spacing:-0.14px;transform:translateX(0.3px);">Ej publicerad</span></div><div class="td c9"><div class="acts"><span class="ab"><svg class="ic" width="24" height="24" viewBox="0 0 24 24" style=""><path fill="#72bb53" d="M22 10l-6-6H4c-1.1 0-2 .9-2 2v12.01c0 1.1.9 1.99 2 1.99l16-.01c1.1 0 2-.89 2-1.99v-8zm-7-4.5l5.5 5.5H15V5.5z"/></svg></span><span class="ab"><svg class="ic" width="24" height="24" viewBox="0 0 24 24" style=""><path fill="currentColor" d="M14 2H6c-1.1 0-1.99.9-1.99 2L4 20c0 1.1.89 2 1.99 2H18c1.1 0 2-.9 2-2V8l-6-6zm2 14h-3v3h-2v-3H8v-2h3v-3h2v3h3v2zm-3-7V3.5L18.5 9H13z"/></svg></span><span class="ab"><svg class="ic" width="24" height="24" viewBox="0 0 24 24" style=""><path fill="currentColor" d="M13 3c-4.97 0-9 4.03-9 9H1l3.89 3.89.07.14L9 12H6c0-3.87 3.13-7 7-7s7 3.13 7 7-3.13 7-7 7c-1.93 0-3.68-.79-4.94-2.06l-1.42 1.42C8.27 19.99 10.51 21 13 21c4.97 0 9-4.03 9-9s-4.03-9-9-9zm-1 5v5l4.28 2.54.72-1.21-3.5-2.08V8H12z"/></svg></span></div></div></div>
<div class="tr"><div class="td c1"><span class="cb rcb"></span><span class="nm" style="letter-spacing:0.30px;transform:translateX(0.3px);">Sofia Johansson</span></div><div class="td c2"><span class="pn" style="letter-spacing:0.10px;transform:translateX(0.5px);">20060315-8901</span></div><div class="td c3"><span class="sc" style="transform:translateX(-0.6px) scaleX(1.054);transform-origin:50% 50%;">SV</span><span class="sn" style="letter-spacing:-0.04px;transform:translateX(-0.6px);">Svenska</span></div><div class="td c4"><span class="gs gN"><span class="gl">-</span><svg class="chev" width="12" height="8" viewBox="0 0 12 8"><path d="M1.5 1.5 6 6l4.5-4.5" fill="none" stroke="currentColor" stroke-width="2"/></svg></span></div><div class="td c5"><span class="cb "></span></div><div class="td c6"><span class="cb "></span></div><div class="td c7"><span class="chip cutk"><span style="transform:scaleX(1.001);transform-origin:50% 50%;">UTKAST</span></span></div><div class="td c8"><span class="pub" style="letter-spacing:-0.14px;transform:translateX(0.3px);">Ej publicerad</span></div><div class="td c9"><div class="acts"><span class="ab"><svg class="ic" width="24" height="24" viewBox="0 0 24 24" style=""><path fill="currentColor" d="M14 2H6c-1.1 0-1.99.9-1.99 2L4 20c0 1.1.89 2 1.99 2H18c1.1 0 2-.9 2-2V8l-6-6zm2 14h-3v3h-2v-3H8v-2h3v-3h2v3h3v2zm-3-7V3.5L18.5 9H13z"/></svg></span><span class="ab"><svg class="ic" width="24" height="24" viewBox="0 0 24 24" style=""><path fill="currentColor" d="M13 3c-4.97 0-9 4.03-9 9H1l3.89 3.89.07.14L9 12H6c0-3.87 3.13-7 7-7s7 3.13 7 7-3.13 7-7 7c-1.93 0-3.68-.79-4.94-2.06l-1.42 1.42C8.27 19.99 10.51 21 13 21c4.97 0 9-4.03 9-9s-4.03-9-9-9zm-1 5v5l4.28 2.54.72-1.21-3.5-2.08V8H12z"/></svg></span></div></div></div>
<div class="tr"><div class="td c1"><span class="cb rcb"></span><span class="nm" style="letter-spacing:0.30px;transform:translateX(0.3px);">Sofia Johansson</span></div><div class="td c2"><span class="pn" style="letter-spacing:0.10px;transform:translateX(0.5px);">20060315-8901</span></div><div class="td c3"><span class="sc" style="transform:translateX(-0.6px) scaleX(0.975);transform-origin:50% 50%;">EN</span><span class="sn" style="letter-spacing:-0.02px;transform:translateX(-0.8px);">Engelska</span></div><div class="td c4"><span class="gs gN"><span class="gl">-</span><svg class="chev" width="12" height="8" viewBox="0 0 12 8"><path d="M1.5 1.5 6 6l4.5-4.5" fill="none" stroke="currentColor" stroke-width="2"/></svg></span></div><div class="td c5"><span class="cb "></span></div><div class="td c6"><span class="cb "></span></div><div class="td c7"><span class="chip cutk"><span style="transform:scaleX(1.001);transform-origin:50% 50%;">UTKAST</span></span></div><div class="td c8"><span class="pub" style="letter-spacing:-0.14px;transform:translateX(0.3px);">Ej publicerad</span></div><div class="td c9"><div class="acts"><span class="ab"><svg class="ic" width="24" height="24" viewBox="0 0 24 24" style=""><path fill="currentColor" d="M14 2H6c-1.1 0-1.99.9-1.99 2L4 20c0 1.1.89 2 1.99 2H18c1.1 0 2-.9 2-2V8l-6-6zm2 14h-3v3h-2v-3H8v-2h3v-3h2v3h3v2zm-3-7V3.5L18.5 9H13z"/></svg></span><span class="ab"><svg class="ic" width="24" height="24" viewBox="0 0 24 24" style=""><path fill="currentColor" d="M13 3c-4.97 0-9 4.03-9 9H1l3.89 3.89.07.14L9 12H6c0-3.87 3.13-7 7-7s7 3.13 7 7-3.13 7-7 7c-1.93 0-3.68-.79-4.94-2.06l-1.42 1.42C8.27 19.99 10.51 21 13 21c4.97 0 9-4.03 9-9s-4.03-9-9-9zm-1 5v5l4.28 2.54.72-1.21-3.5-2.08V8H12z"/></svg></span></div></div></div>
<div class="tr"><div class="td c1"><span class="cb rcb"></span><span class="nm" style="letter-spacing:0.31px;transform:translateX(-0.2px);">Lucas Nilsson</span></div><div class="td c2"><span class="pn" style="letter-spacing:0.10px;transform:translateX(0.5px);">20060407-2345</span></div><div class="td c3"><span class="sc" style="transform:scaleX(1.100);transform-origin:50% 50%;">MA</span><span class="sn" style="letter-spacing:0.65px;transform:translateX(-0.4px);">Matematik</span></div><div class="td c4"><span class="gs gC lk"><span class="gl">C</span><svg class="chev" width="12" height="8" viewBox="0 0 12 8"><path d="M1.5 1.5 6 6l4.5-4.5" fill="none" stroke="currentColor" stroke-width="2"/></svg></span></div><div class="td c5"><span class="cb "></span></div><div class="td c6"><span class="cb on "><svg class="ic" width="14.5" height="14.5" viewBox="0 0 24 24" style=""><path fill="#fff" d="M9 16.17L4.83 12l-1.41 1.41L9 19 21 7l-1.41-1.41z"/></svg></span></div><div class="td c7"><span class="chip clast"><span style="transform:scaleX(0.985);transform-origin:50% 50%;">LÅST</span></span></div><div class="td c8"><span class="pub ok" style="letter-spacing:-0.14px;transform:translateX(0.4px);">Publicerad 2025-06-15</span></div><div class="td c9"><div class="acts"><span class="ab"><svg class="ic" width="24" height="24" viewBox="0 0 24 24" style=""><path fill="currentColor" d="M14 2H6c-1.1 0-1.99.9-1.99 2L4 20c0 1.1.89 2 1.99 2H18c1.1 0 2-.9 2-2V8l-6-6zm2 14h-3v3h-2v-3H8v-2h3v-3h2v3h3v2zm-3-7V3.5L18.5 9H13z"/></svg></span><span class="ab"><svg class="ic" width="24" height="24" viewBox="0 0 24 24" style=""><path fill="currentColor" d="M13 3c-4.97 0-9 4.03-9 9H1l3.89 3.89.07.14L9 12H6c0-3.87 3.13-7 7-7s7 3.13 7 7-3.13 7-7 7c-1.93 0-3.68-.79-4.94-2.06l-1.42 1.42C8.27 19.99 10.51 21 13 21c4.97 0 9-4.03 9-9s-4.03-9-9-9zm-1 5v5l4.28 2.54.72-1.21-3.5-2.08V8H12z"/></svg></span></div></div></div>
<div class="tr"><div class="td c1"><span class="cb rcb"></span><span class="nm" style="letter-spacing:0.31px;transform:translateX(-0.2px);">Lucas Nilsson</span></div><div class="td c2"><span class="pn" style="letter-spacing:0.10px;transform:translateX(0.5px);">20060407-2345</span></div><div class="td c3"><span class="sc" style="transform:translateX(-0.6px) scaleX(1.054);transform-origin:50% 50%;">SV</span><span class="sn" style="letter-spacing:-0.04px;transform:translateX(-0.6px);">Svenska</span></div><div class="td c4"><span class="gs gN"><span class="gl">-</span><svg class="chev" width="12" height="8" viewBox="0 0 12 8"><path d="M1.5 1.5 6 6l4.5-4.5" fill="none" stroke="currentColor" stroke-width="2"/></svg></span></div><div class="td c5"><span class="cb "></span></div><div class="td c6"><span class="cb "></span></div><div class="td c7"><span class="chip cutk"><span style="transform:scaleX(1.001);transform-origin:50% 50%;">UTKAST</span></span></div><div class="td c8"><span class="pub" style="letter-spacing:-0.14px;transform:translateX(0.3px);">Ej publicerad</span></div><div class="td c9"><div class="acts"><span class="ab"><svg class="ic" width="24" height="24" viewBox="0 0 24 24" style=""><path fill="currentColor" d="M14 2H6c-1.1 0-1.99.9-1.99 2L4 20c0 1.1.89 2 1.99 2H18c1.1 0 2-.9 2-2V8l-6-6zm2 14h-3v3h-2v-3H8v-2h3v-3h2v3h3v2zm-3-7V3.5L18.5 9H13z"/></svg></span><span class="ab"><svg class="ic" width="24" height="24" viewBox="0 0 24 24" style=""><path fill="currentColor" d="M13 3c-4.97 0-9 4.03-9 9H1l3.89 3.89.07.14L9 12H6c0-3.87 3.13-7 7-7s7 3.13 7 7-3.13 7-7 7c-1.93 0-3.68-.79-4.94-2.06l-1.42 1.42C8.27 19.99 10.51 21 13 21c4.97 0 9-4.03 9-9s-4.03-9-9-9zm-1 5v5l4.28 2.54.72-1.21-3.5-2.08V8H12z"/></svg></span></div></div></div>
<div class="tr"><div class="td c1"><span class="cb rcb"></span><span class="nm" style="letter-spacing:0.31px;transform:translateX(-0.2px);">Lucas Nilsson</span></div><div class="td c2"><span class="pn" style="letter-spacing:0.10px;transform:translateX(0.5px);">20060407-2345</span></div><div class="td c3"><span class="sc" style="transform:translateX(-0.6px) scaleX(0.975);transform-origin:50% 50%;">EN</span><span class="sn" style="letter-spacing:-0.02px;transform:translateX(-0.8px);">Engelska</span></div><div class="td c4"><span class="gs gB lk"><span class="gl">B</span><svg class="chev" width="12" height="8" viewBox="0 0 12 8"><path d="M1.5 1.5 6 6l4.5-4.5" fill="none" stroke="currentColor" stroke-width="2"/></svg></span></div><div class="td c5"><span class="cb "></span></div><div class="td c6"><span class="cb on "><svg class="ic" width="14.5" height="14.5" viewBox="0 0 24 24" style=""><path fill="#fff" d="M9 16.17L4.83 12l-1.41 1.41L9 19 21 7l-1.41-1.41z"/></svg></span></div><div class="td c7"><span class="chip clast"><span style="transform:scaleX(0.985);transform-origin:50% 50%;">LÅST</span></span></div><div class="td c8"><span class="pub ok" style="letter-spacing:-0.14px;transform:translateX(0.4px);">Publicerad 2025-06-15</span></div><div class="td c9"><div class="acts"><span class="ab"><svg class="ic" width="24" height="24" viewBox="0 0 24 24" style=""><path fill="currentColor" d="M14 2H6c-1.1 0-1.99.9-1.99 2L4 20c0 1.1.89 2 1.99 2H18c1.1 0 2-.9 2-2V8l-6-6zm2 14h-3v3h-2v-3H8v-2h3v-3h2v3h3v2zm-3-7V3.5L18.5 9H13z"/></svg></span><span class="ab"><svg class="ic" width="24" height="24" viewBox="0 0 24 24" style=""><path fill="currentColor" d="M13 3c-4.97 0-9 4.03-9 9H1l3.89 3.89.07.14L9 12H6c0-3.87 3.13-7 7-7s7 3.13 7 7-3.13 7-7 7c-1.93 0-3.68-.79-4.94-2.06l-1.42 1.42C8.27 19.99 10.51 21 13 21c4.97 0 9-4.03 9-9s-4.03-9-9-9zm-1 5v5l4.28 2.54.72-1.21-3.5-2.08V8H12z"/></svg></span></div></div></div>
<div class="tr"><div class="td c1"><span class="cb rcb"></span><span class="nm" style="letter-spacing:0.42px;transform:translateX(-0.4px);">Maja Karlsson</span></div><div class="td c2"><span class="pn" style="letter-spacing:0.10px;transform:translateX(0.5px);">20060518-6789</span></div><div class="td c3"><span class="sc" style="transform:scaleX(1.100);transform-origin:50% 50%;">MA</span><span class="sn" style="letter-spacing:0.65px;transform:translateX(-0.4px);">Matematik</span></div><div class="td c4"><span class="gs gN"><span class="gl">-</span><svg class="chev" width="12" height="8" viewBox="0 0 12 8"><path d="M1.5 1.5 6 6l4.5-4.5" fill="none" stroke="currentColor" stroke-width="2"/></svg></span></div><div class="td c5"><span class="cb "></span></div><div class="td c6"><span class="cb "></span></div><div class="td c7"><span class="chip cutk"><span style="transform:scaleX(1.001);transform-origin:50% 50%;">UTKAST</span></span></div><div class="td c8"><span class="pub" style="letter-spacing:-0.14px;transform:translateX(0.3px);">Ej publicerad</span></div><div class="td c9"><div class="acts"><span class="ab"><svg class="ic" width="24" height="24" viewBox="0 0 24 24" style=""><path fill="currentColor" d="M14 2H6c-1.1 0-1.99.9-1.99 2L4 20c0 1.1.89 2 1.99 2H18c1.1 0 2-.9 2-2V8l-6-6zm2 14h-3v3h-2v-3H8v-2h3v-3h2v3h3v2zm-3-7V3.5L18.5 9H13z"/></svg></span><span class="ab"><svg class="ic" width="24" height="24" viewBox="0 0 24 24" style=""><path fill="currentColor" d="M13 3c-4.97 0-9 4.03-9 9H1l3.89 3.89.07.14L9 12H6c0-3.87 3.13-7 7-7s7 3.13 7 7-3.13 7-7 7c-1.93 0-3.68-.79-4.94-2.06l-1.42 1.42C8.27 19.99 10.51 21 13 21c4.97 0 9-4.03 9-9s-4.03-9-9-9zm-1 5v5l4.28 2.54.72-1.21-3.5-2.08V8H12z"/></svg></span></div></div></div>
<div class="tr"><div class="td c1"><span class="cb rcb"></span><span class="nm" style="letter-spacing:0.42px;transform:translateX(-0.4px);">Maja Karlsson</span></div><div class="td c2"><span class="pn" style="letter-spacing:0.10px;transform:translateX(0.5px);">20060518-6789</span></div><div class="td c3"><span class="sc" style="transform:translateX(-0.6px) scaleX(1.054);transform-origin:50% 50%;">SV</span><span class="sn" style="letter-spacing:-0.04px;transform:translateX(-0.6px);">Svenska</span></div><div class="td c4"><span class="gs gN"><span class="gl">-</span><svg class="chev" width="12" height="8" viewBox="0 0 12 8"><path d="M1.5 1.5 6 6l4.5-4.5" fill="none" stroke="currentColor" stroke-width="2"/></svg></span></div><div class="td c5"><span class="cb "></span></div><div class="td c6"><span class="cb "></span></div><div class="td c7"><span class="chip cutk"><span style="transform:scaleX(1.001);transform-origin:50% 50%;">UTKAST</span></span></div><div class="td c8"><span class="pub" style="letter-spacing:-0.14px;transform:translateX(0.3px);">Ej publicerad</span></div><div class="td c9"><div class="acts"><span class="ab"><svg class="ic" width="24" height="24" viewBox="0 0 24 24" style=""><path fill="currentColor" d="M14 2H6c-1.1 0-1.99.9-1.99 2L4 20c0 1.1.89 2 1.99 2H18c1.1 0 2-.9 2-2V8l-6-6zm2 14h-3v3h-2v-3H8v-2h3v-3h2v3h3v2zm-3-7V3.5L18.5 9H13z"/></svg></span><span class="ab"><svg class="ic" width="24" height="24" viewBox="0 0 24 24" style=""><path fill="currentColor" d="M13 3c-4.97 0-9 4.03-9 9H1l3.89 3.89.07.14L9 12H6c0-3.87 3.13-7 7-7s7 3.13 7 7-3.13 7-7 7c-1.93 0-3.68-.79-4.94-2.06l-1.42 1.42C8.27 19.99 10.51 21 13 21c4.97 0 9-4.03 9-9s-4.03-9-9-9zm-1 5v5l4.28 2.54.72-1.21-3.5-2.08V8H12z"/></svg></span></div></div></div>
<div class="tr"><div class="td c1"><span class="cb rcb"></span><span class="nm" style="letter-spacing:0.42px;transform:translateX(-0.4px);">Maja Karlsson</span></div><div class="td c2"><span class="pn" style="letter-spacing:0.10px;transform:translateX(0.5px);">20060518-6789</span></div><div class="td c3"><span class="sc" style="transform:translateX(-0.6px) scaleX(0.975);transform-origin:50% 50%;">EN</span><span class="sn" style="letter-spacing:-0.02px;transform:translateX(-0.8px);">Engelska</span></div><div class="td c4"><span class="gs gN"><span class="gl">-</span><svg class="chev" width="12" height="8" viewBox="0 0 12 8"><path d="M1.5 1.5 6 6l4.5-4.5" fill="none" stroke="currentColor" stroke-width="2"/></svg></span></div><div class="td c5"><span class="cb "></span></div><div class="td c6"><span class="cb "></span></div><div class="td c7"><span class="chip cutk"><span style="transform:scaleX(1.001);transform-origin:50% 50%;">UTKAST</span></span></div><div class="td c8"><span class="pub" style="letter-spacing:-0.14px;transform:translateX(0.3px);">Ej publicerad</span></div><div class="td c9"><div class="acts"><span class="ab"><svg class="ic" width="24" height="24" viewBox="0 0 24 24" style=""><path fill="currentColor" d="M14 2H6c-1.1 0-1.99.9-1.99 2L4 20c0 1.1.89 2 1.99 2H18c1.1 0 2-.9 2-2V8l-6-6zm2 14h-3v3h-2v-3H8v-2h3v-3h2v3h3v2zm-3-7V3.5L18.5 9H13z"/></svg></span><span class="ab"><svg class="ic" width="24" height="24" viewBox="0 0 24 24" style=""><path fill="currentColor" d="M13 3c-4.97 0-9 4.03-9 9H1l3.89 3.89.07.14L9 12H6c0-3.87 3.13-7 7-7s7 3.13 7 7-3.13 7-7 7c-1.93 0-3.68-.79-4.94-2.06l-1.42 1.42C8.27 19.99 10.51 21 13 21c4.97 0 9-4.03 9-9s-4.03-9-9-9zm-1 5v5l4.28 2.54.72-1.21-3.5-2.08V8H12z"/></svg></span></div></div></div>
<i class="c1sh"></i></div>
<span class="fab"><svg class="ic" width="24" height="24" viewBox="0 0 24 24" style=""><path fill="#fff" d="M6 10c-1.1 0-2 .9-2 2s.9 2 2 2 2-.9 2-2-.9-2-2-2zm12 0c-1.1 0-2 .9-2 2s.9 2 2 2 2-.9 2-2-.9-2-2-2zm-6 0c-1.1 0-2 .9-2 2s.9 2 2 2 2-.9 2-2-.9-2-2-2z"/></svg></span>
</section>
<section class="card k5"><h3 style="letter-spacing:0.41px;transform:translateX(-0.4px);">Information om betygsregistrering</h3>
<div class="ibox ib1"><svg class="ic" width="24" height="24" viewBox="0 0 24 24" style=""><path fill="#26408f" d="M12 2C6.48 2 2 6.48 2 12s4.48 10 10 10 10-4.48 10-10S17.52 2 12 2zm1 15h-2v-6h2v6zm0-8h-2V7h2v2z"/></svg><div class="ibt"><b style="letter-spacing:-0.34px;">Betygsskalor:</b><ul>
<li><span style="letter-spacing:0.04px;transform:translateX(0.4px);">Grundskola/Gymnasium: A-F, -</span></li>
<li><span style="letter-spacing:-0.11px;transform:translateX(0.4px);">Anpassad: A-E, -, 1 (deltagit)</span></li>
<li><span style="letter-spacing:-0.13px;transform:translateX(-0.6px);">Komvux/SFI: IG-G</span></li>
<li><span style="letter-spacing:-0.25px;transform:translateX(0.4px);">Yrkeshögskola: IG-VG</span></li>
</ul></div></div>
<div class="ibox ib2"><svg class="ic" width="24" height="24" viewBox="0 0 24 24" style=""><path fill="#333" d="M1 21h22L12 2 1 21zm12-3h-2v-2h2v2zm0-4h-2v-4h2v4z"/></svg><div class="ibt"><b style="letter-spacing:-0.19px;transform:translateX(0.4px);">Viktigt att tänka på:</b><ul>
<li><span style="letter-spacing:0.16px;transform:translateX(-0.2px);">Slutbetyg kan endast sättas i åk 9 (grundskola) eller åk 3 (gymnasium)</span></li>
<li><span style="letter-spacing:0.04px;transform:translateX(-0.2px);">Betyg F eller - kräver obligatorisk notering</span></li>
<li><span style="letter-spacing:0.12px;transform:translateX(-0.2px);">Kontrollera att kurskoden är giltig enligt Skolverket</span></li>
<li><span style="letter-spacing:0.22px;transform:translateX(-0.2px);">Definitiva betyg låses automatiskt 20 dagar efter publicering</span></li>
</ul></div></div></section>
</main></body></html>
